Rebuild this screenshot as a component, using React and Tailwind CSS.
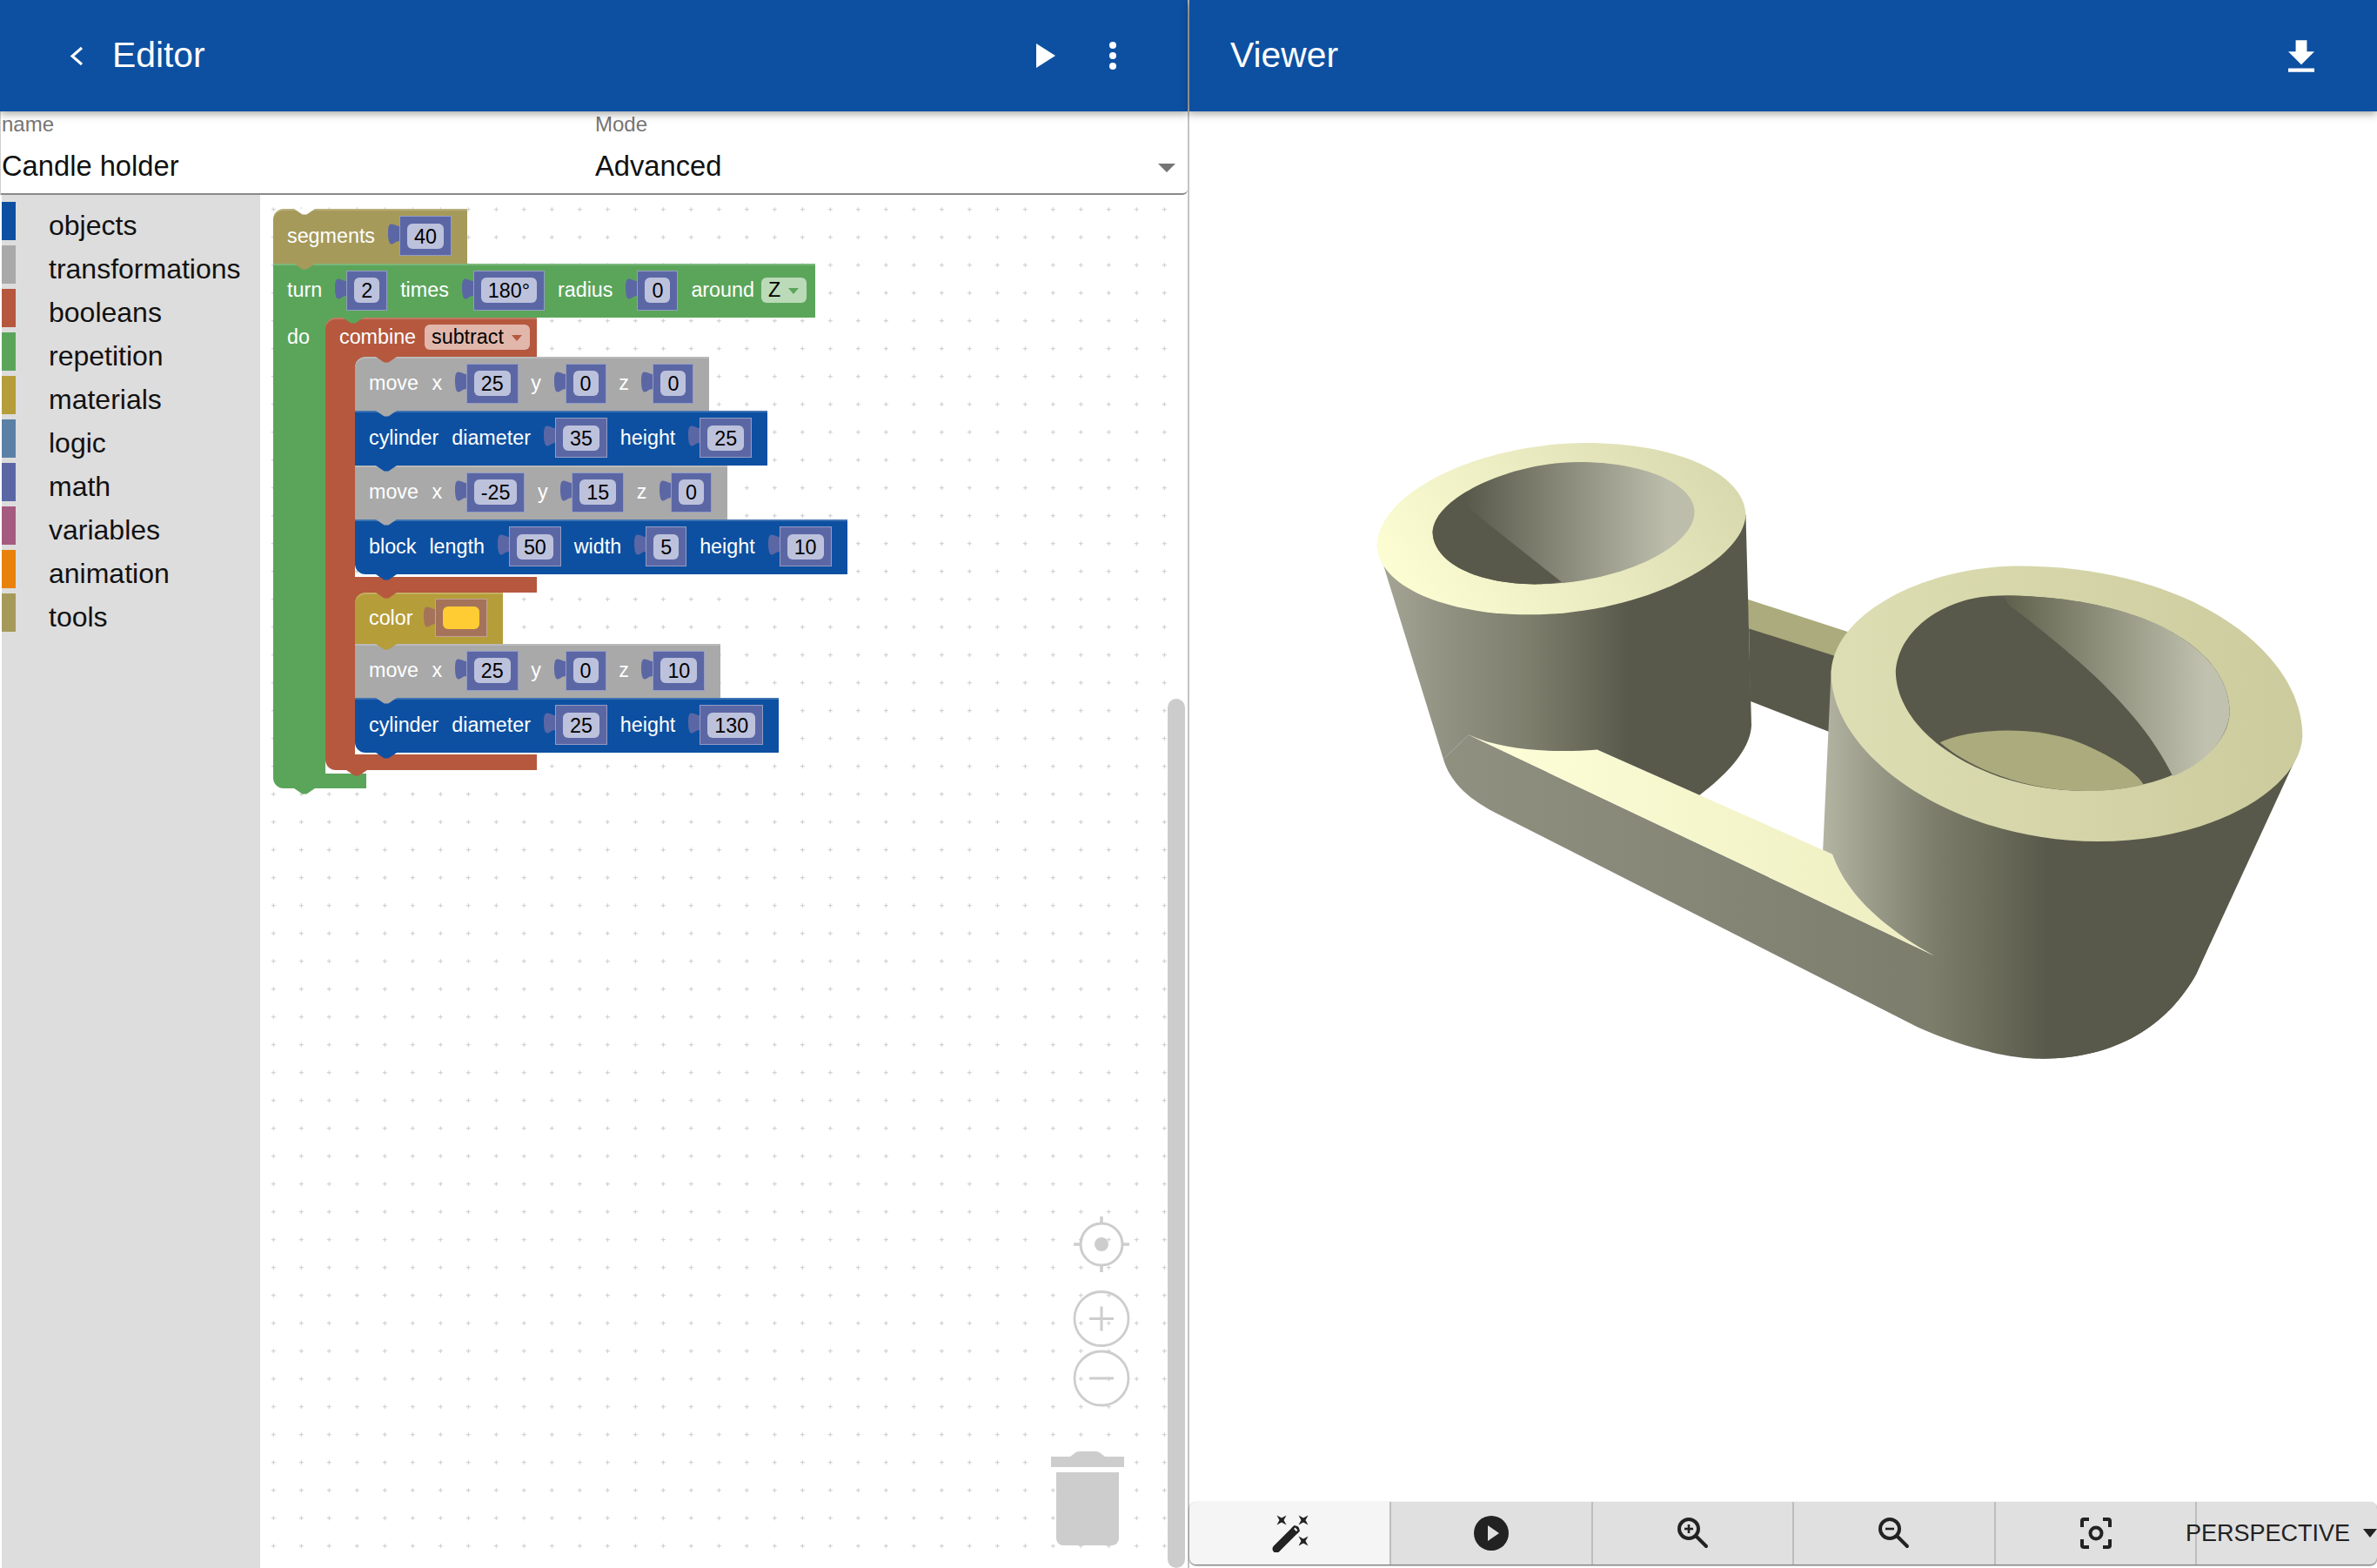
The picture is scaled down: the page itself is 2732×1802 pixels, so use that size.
const GREEN = 'bg-[#5ba55b]';
const RED = 'bg-[#b5583e]';
const GRAY = 'bg-[#a9a9a9]';
const BLUE = 'bg-[#0d50a1]';
const KHAKI = 'bg-[#a69a5b]';
const GOLD = 'bg-[#b59d3a]';

const CATEGORIES = [
  ['objects', 'bg-[#0d50a1]'],
  ['transformations', 'bg-[#a9a9a9]'],
  ['booleans', 'bg-[#b5583e]'],
  ['repetition', 'bg-[#5ba55b]'],
  ['materials', 'bg-[#b59d3a]'],
  ['logic', 'bg-[#5b80a5]'],
  ['math', 'bg-[#5b67a5]'],
  ['variables', 'bg-[#a55b80]'],
  ['animation', 'bg-[#e8820c]'],
  ['tools', 'bg-[#a69a5b]'],
];

function Notch({ fill, left, top }) {
  return (
    <svg
      viewBox="0 0 24 7"
      className={`absolute z-10 h-[7px] w-[24px] ${top ? 'top-0' : 'top-full'}`}
      style={{ left }}
    >
      <path d="M0 0L9.6 6.6H14.4L24 0Z" fill={fill} />
    </svg>
  );
}

function Row({ color, fill, behind = '', h = 'h-[62.5px]', gap = 'gap-[15px]', notch = 24, pr = 'pr-[18px]', round = '', width = 'w-fit', children }) {
  return (
    <div className={`w-fit ${behind}`}>
      <div
        className={`relative flex items-center pl-4 text-white shadow-[inset_0_2px_0_rgba(255,255,255,0.2)] ${gap} ${h} ${width} ${pr} ${color} ${round}`}
      >
        {children}
        <Notch fill={fill} left={notch} />
      </div>
    </div>
  );
}

function Tab({ fill }) {
  return (
    <svg viewBox="0 0 13 24" preserveAspectRatio="none" className="mt-[9px] h-[24px] w-[13px] shrink-0">
      <path d="M13 3C10 3 7 0 3 .5C.5 1 0 6 0 11C0 17 1 23 3.5 23.5C6 24 9 20 13 20Z" fill={fill} />
    </svg>
  );
}

function Field({ value }) {
  return (
    <div className="flex items-start">
      <Tab fill="#5b67a5" />
      <div className="border border-white/35 bg-[#5b67a5] px-2 py-[7.5px]">
        <div className="h-[29px] rounded-[6px] bg-[#bdc2dc] px-2 text-center leading-[30px] text-black">{value}</div>
      </div>
    </div>
  );
}

function Dropdown({ value, bg, arrow }) {
  return (
    <div className={`flex h-[29px] items-center gap-[9px] rounded-[6px] pl-2 pr-[9px] text-black ${bg}`}>
      <span>{value}</span>
      <svg viewBox="0 0 12 7" className="mt-0.5 h-[7px] w-[12px]">
        <path d="M0 0H12L6 7Z" fill={arrow} />
      </svg>
    </div>
  );
}

function MoveRow({ x, y, z, behind }) {
  return (
    <Row color={GRAY} fill="#a9a9a9" behind={behind} gap="gap-[14.6px]" round={behind ? 'rounded-tl-[12px]' : ''}>
      <span>move</span>
      <span className="ml-[1px]">x</span>
      <Field value={x} />
      <span>y</span>
      <Field value={y} />
      <span>z</span>
      <Field value={z} />
    </Row>
  );
}

function CylinderRow({ diameter, height, last }) {
  return (
    <Row color={BLUE} fill="#0d50a1" round={last ? 'rounded-bl-[12px]' : ''}>
      <span>cylinder</span>
      <span>diameter</span>
      <Field value={diameter} />
      <span>height</span>
      <Field value={height} />
    </Row>
  );
}

function Blocks() {
  return (
    <div className="relative w-fit text-[23.3px]">
      <div className="relative">
        <Notch fill="#ffffff" left={24} top />
        <Row color={KHAKI} fill="#a69a5b" round="rounded-tl-[12px]">
          <span>segments</span>
          <Field value="40" />
        </Row>
      </div>

      <Row color={GREEN} fill="#5ba55b" notch={80} pr="pr-[10px]">
        <span>turn</span>
        <Field value="2" />
        <span>times</span>
        <Field value="180°" />
        <span>radius</span>
        <Field value="0" />
        <span>around</span>
        <span className="-ml-[7px]">
          <Dropdown value="Z" bg="bg-[#bbdbb8]" arrow="#5ba55b" />
        </span>
      </Row>

      <div className="relative flex">
        <div className={`flex w-[60px] rounded-bl-[12px] ${GREEN}`}>
          <span className="flex h-[44.5px] items-center pl-4 text-white">do</span>
        </div>
        <div className="flex flex-col">
          <div className="relative">
            <Row color={RED} fill="#b5583e" behind={GREEN} h="h-[44.5px]" notch={58} pr="pr-[10px]" width="w-[243px]" round="rounded-tl-[12px]">
              <span>combine</span>
              <span className="-ml-[5px]">
                <Dropdown value="subtract" bg="bg-[#e1b7ac]" arrow="#b5583e" />
              </span>
            </Row>
            <div className="flex">
              <div className={`w-[34px] rounded-bl-[12px] ${RED}`} />
              <div className="flex flex-col">
                <MoveRow x="25" y="0" z="0" behind={RED} />
                <CylinderRow diameter="35" height="25" />
                <MoveRow x="-25" y="15" z="0" />
                <Row color={BLUE} fill="#0d50a1" round="rounded-bl-[12px]">
                  <span>block</span>
                  <span>length</span>
                  <Field value="50" />
                  <span>width</span>
                  <Field value="5" />
                  <span>height</span>
                  <Field value="10" />
                </Row>
                <div className={`relative mt-[3px] h-[18px] w-[209px] ${RED}`}>
                  <Notch fill="#b5583e" left={24} />
                </div>
                <Row color={GOLD} fill="#b59d3a" behind={RED} h="h-[59px]" gap="gap-[12px]" pr="pr-[18px]" round="rounded-tl-[12px]">
                  <span>color</span>
                  <div className="flex items-start">
                    <Tab fill="#a4735a" />
                    <div className="border border-white/35 bg-[#a4735a] px-2 py-2">
                      <div className="h-[26px] w-[42px] rounded-[6px] bg-[#ffcc33]" />
                    </div>
                  </div>
                </Row>
                <MoveRow x="25" y="0" z="10" />
                <CylinderRow diameter="25" height="130" last />
                <div className={`mt-[2px] h-[18px] w-[209px] ${RED}`} />
              </div>
            </div>
            <Notch fill="#b5583e" left={24} />
          </div>
          <div className={`mt-[4px] h-[17px] w-[47px] ${GREEN}`} />
        </div>
        <Notch fill="#5ba55b" left={24} />
      </div>
    </div>
  );
}

function WorkspaceControls() {
  return (
    <svg viewBox="0 0 100 392" className="absolute left-[901px] top-[1166px] h-[392px] w-[100px]" fill="none" stroke="#cdcdcd">
      <circle cx="66" cy="40" r="24" strokeWidth="3" />
      <circle cx="66" cy="40" r="8" fill="#cdcdcd" stroke="none" />
      <path d="M66 8v9M66 63v9M34 40h9M89 40h9" strokeWidth="3.5" />
      <circle cx="66" cy="125.5" r="31" strokeWidth="2.8" />
      <path d="M52 125.5h28M66 111.5v28" strokeWidth="3" />
      <circle cx="66" cy="194" r="31" strokeWidth="2.8" />
      <path d="M52 194h28" strokeWidth="3" />
      <g fill="#cdcdcd" stroke="none">
        <path d="M8 284h22l4-3c2-2 4-3 7-3h18c3 0 5 1 7 3l4 3h22v12H8z" />
        <path d="M14 302h72v76a8 8 0 0 1-8 8H22a8 8 0 0 1-8-8z" />
      </g>
    </svg>
  );
}

function Workspace() {
  return (
    <div className="relative flex-1 overflow-hidden bg-white pl-[15px] pt-4">
      <svg className="absolute inset-0 h-full w-full">
        <defs>
          <pattern id="grid" width="32" height="32" patternUnits="userSpaceOnUse">
            <path d="M12.8 16.7h5M15.3 14.2v5" stroke="#cccccc" strokeWidth="1" />
          </pattern>
        </defs>
        <rect width="100%" height="100%" fill="url(#grid)" />
      </svg>
      <Blocks />
      <WorkspaceControls />
      <div className="absolute bottom-0 right-[3px] top-[579px] w-[20px] rounded-[10px] bg-[#cccccc]" />
    </div>
  );
}

function Toolbox() {
  return (
    <div className="ml-[2px] w-[297px] bg-[#dddddd] pt-2">
      {CATEGORIES.map(([name, color]) => (
        <div key={name} className="mb-[6px] flex h-[44px] items-center">
          <div className={`h-full w-4 ${color}`} />
          <span className="ml-[38px] pt-[9px] text-[32px] text-[#111111]">{name}</span>
        </div>
      ))}
    </div>
  );
}

function EditorPane() {
  return (
    <div className="flex w-[1367px] flex-col border-r-2 border-[#c4c4c4]">
      <header className="relative z-20 flex h-[128px] items-center bg-[#0d50a1] pl-[80px] text-white shadow-[0_3px_9px_rgba(0,0,0,0.35)]">
        <svg viewBox="0 0 16 23" className="h-[23px] w-4" fill="none" stroke="white" strokeWidth="3">
          <path d="M14 2L3 11.5L14 21" />
        </svg>
        <span className="ml-[33px] text-[40.8px]">Editor</span>
        <svg viewBox="0 0 22 28" className="ml-[955px] h-[28px] w-[22px]">
          <path d="M0 0L22 14L0 28Z" fill="white" />
        </svg>
        <svg viewBox="0 0 8 32" className="ml-[62px] h-[32px] w-2" fill="white">
          <circle cx="4" cy="4" r="4" />
          <circle cx="4" cy="16" r="4" />
          <circle cx="4" cy="28" r="4" />
        </svg>
      </header>

      <div className="flex h-[96px] rounded-br-[6px] border-b-2 border-l border-[#8a8a8a] border-l-[#cfcfcf] pl-[1px]">
        <div className="w-[682px]">
          <div className="text-[24px] leading-[30px] text-[#757575]">name</div>
          <div className="mt-[11px] text-[32.7px] leading-[44px] text-[#111111]">Candle holder</div>
        </div>
        <div className="flex-1 pr-[14px]">
          <div className="text-[24px] leading-[30px] text-[#757575]">Mode</div>
          <div className="mt-[11px] flex items-center justify-between text-[32.7px] leading-[44px] text-[#111111]">
            <span>Advanced</span>
            <svg viewBox="0 0 20 10" className="mt-[3px] h-[10px] w-5">
              <path d="M0 0H20L10 10Z" fill="#757575" />
            </svg>
          </div>
        </div>
      </div>

      <div className="flex min-h-0 flex-1">
        <Toolbox />
        <Workspace />
      </div>
    </div>
  );
}

function Spark({ x, y }) {
  return <path transform={`translate(${x} ${y})`} d="M-5.5-5.5L0-2.5L5.5-5.5L2.5 0L5.5 5.5L0 2.5L-5.5 5.5L-2.5 0Z" fill="#222222" />;
}

function WandIcon() {
  return (
    <svg viewBox="0 0 48 44" className="h-[44px] w-[48px]">
      <Spark x={15} y={7} />
      <Spark x={40} y={7} />
      <Spark x={40} y={31} />
      <path d="M9 40L31 18" stroke="#222222" strokeWidth="9" strokeLinecap="round" />
      <path d="M29.5 19.5L33 16" stroke="#222222" strokeWidth="9" />
      <path d="M30.5 18.5L32 17" stroke="#f5f5f5" strokeWidth="4" />
    </svg>
  );
}

function PlayCircleIcon() {
  return (
    <svg viewBox="0 0 40 40" className="h-10 w-10">
      <circle cx="20" cy="20" r="20" fill="#222222" />
      <path d="M16 11L29 20L16 29Z" fill="#e0e0e0" />
    </svg>
  );
}

function ZoomIcon({ plus }) {
  return (
    <svg viewBox="0 0 38 38" className="h-[38px] w-[38px]" fill="none" stroke="#222222">
      <circle cx="14" cy="14" r="11" strokeWidth="4" />
      <path d="M23 23L34 34" strokeWidth="4" strokeLinecap="round" />
      <path d="M9 14H19" strokeWidth="2.6" />
      {plus && <path d="M14 9V19" strokeWidth="2.6" />}
    </svg>
  );
}

function FocusIcon() {
  return (
    <svg viewBox="0 0 36 36" className="h-9 w-9" fill="none" stroke="#222222" strokeWidth="4">
      <path d="M2 11V4a2 2 0 0 1 2-2h6M26 2h6a2 2 0 0 1 2 2v7M34 25v7a2 2 0 0 1-2 2h-6M10 34H4a2 2 0 0 1-2-2v-7" />
      <circle cx="18" cy="18" r="6.5" />
    </svg>
  );
}

function ModelDrawing() {
  return (
    <svg viewBox="0 0 1568 1568" preserveAspectRatio="none" className="ml-[172px] mt-[352px] h-[760px] w-[1140px]">
      <defs>
        <linearGradient id="wall" gradientUnits="userSpaceOnUse" x1="165" y1="0" x2="1120" y2="0">
          <stop offset="0" stopColor="#8f9080" />
          <stop offset="0.56" stopColor="#828373" />
          <stop offset="0.81" stopColor="#7c7d6b" />
          <stop offset="0.916" stopColor="#696a58" />
          <stop offset="1" stopColor="#58594a" />
        </linearGradient>
        <linearGradient id="leftSide" gradientUnits="userSpaceOnUse" x1="60" y1="0" x2="460" y2="0">
          <stop offset="0" stopColor="#a5a695" />
          <stop offset="0.3" stopColor="#8f9080" />
          <stop offset="0.6" stopColor="#7d7e6c" />
          <stop offset="1" stopColor="#58594a" />
        </linearGradient>
        <linearGradient id="rightSide" gradientUnits="userSpaceOnUse" x1="768" y1="0" x2="1120" y2="0">
          <stop offset="0" stopColor="#b2b3a1" />
          <stop offset="0.233" stopColor="#989987" />
          <stop offset="0.489" stopColor="#7c7d6b" />
          <stop offset="0.773" stopColor="#696a58" />
          <stop offset="1" stopColor="#58594a" />
        </linearGradient>
        <linearGradient id="leftRing" gradientUnits="userSpaceOnUse" x1="60" y1="400" x2="640" y2="150">
          <stop offset="0" stopColor="#feffd4" />
          <stop offset="1" stopColor="#d8d8ae" />
        </linearGradient>
        <linearGradient id="rightRing" gradientUnits="userSpaceOnUse" x1="778" y1="0" x2="1523" y2="0">
          <stop offset="0" stopColor="#dedeb4" />
          <stop offset="1" stopColor="#cbcb9d" />
        </linearGradient>
        <linearGradient id="leftHole" gradientUnits="userSpaceOnUse" x1="200" y1="0" x2="520" y2="0">
          <stop offset="0" stopColor="#58594a" />
          <stop offset="1" stopColor="#bcbdab" />
        </linearGradient>
        <linearGradient id="rightHole" gradientUnits="userSpaceOnUse" x1="1060" y1="0" x2="1370" y2="0">
          <stop offset="0" stopColor="#62634f" />
          <stop offset="1" stopColor="#c0c1ae" />
        </linearGradient>
        <linearGradient id="ledge" gradientUnits="userSpaceOnUse" x1="210" y1="0" x2="900" y2="0">
          <stop offset="0" stopColor="#feffd8" />
          <stop offset="1" stopColor="#eeeec2" />
        </linearGradient>
      </defs>

      {/* back bar */}
      <path d="M645 430L805 508L785 570L648 500Z" fill="#acab7d" />
      <path d="M648 500L790 568L775 745L650 672Z" fill="#58594a" />

      {/* long front wall */}
      <path d="M165 810C175 860 200 900 245 935L915 1445C990 1495 1060 1520 1110 1520C1230 1520 1310 1440 1355 1320L1515 800L940 1275L205 752Z" fill="url(#wall)" />

      {/* ledge */}
      <path d="M205 752C260 790 340 795 408 787L780 1035C800 1120 850 1200 940 1275Z" fill="url(#ledge)" />

      {/* left cylinder */}
      <path d="M60 300L165 810L205 752C260 790 340 795 408 787L570 895C610 850 650 790 652 730L643 230Z" fill="url(#leftSide)" />
      <path d="M60 300C65 170 230 60 390 60C530 60 640 130 643 230C640 340 480 467 300 467C170 467 60 400 60 300Z" fill="url(#leftRing)" />
      <path d="M148 270C150 190 270 105 380 105C480 105 562 155 562 225C560 310 440 395 310 395C220 395 148 345 148 270Z" fill="url(#leftHole)" />
      <path d="M148 270C150 240 175 215 205 215L352 390C335 393 320 395 310 395C220 395 148 345 148 270Z" fill="#58594a" />

      {/* right cylinder */}
      <path d="M778 600L765 1025L780 1035C800 1120 850 1200 940 1275C1000 1330 1060 1420 1110 1520C1230 1520 1310 1440 1355 1320L1523 755Z" fill="url(#rightSide)" />
      <path d="M778 600C785 460 930 352 1075 352C1340 352 1523 550 1523 755C1520 880 1380 1005 1200 1005C970 1005 775 800 778 600Z" fill="url(#rightRing)" />
      <path d="M880 600C885 500 960 422 1045 422C1260 422 1408 540 1408 700C1405 800 1310 885 1180 885C1020 885 880 750 880 600Z" fill="#58594a" />
      <path d="M1050 422C1260 422 1408 540 1408 700C1405 760 1370 820 1318 850C1270 700 1170 570 1060 445Z" fill="url(#rightHole)" />
      <path d="M950 770C1000 735 1100 730 1170 770C1220 800 1260 840 1272 870C1240 882 1210 885 1180 885C1090 885 1000 835 950 770Z" fill="#acab7d" />
    </svg>
  );
}

function ViewerPane() {
  return (
    <div className="flex min-w-0 flex-1 flex-col">
      <header className="relative z-20 flex h-[128px] items-center justify-between bg-[#0d50a1] pl-[47px] pr-[72px] text-white shadow-[0_3px_9px_rgba(0,0,0,0.35)]">
        <span className="text-[40.8px]">Viewer</span>
        <svg viewBox="5 3 14 17" className="h-[37px] w-[30px]">
          <path d="M19 9h-4V3H9v6H5l7 7 7-7zM5 18v2h14v-2H5z" fill="white" />
        </svg>
      </header>

      <div className="min-h-0 flex-1 bg-white">
        <ModelDrawing />
      </div>

      <div className="mb-1 flex h-[72px] items-stretch rounded-[8px] bg-[#e0e0e0] text-[#222222] shadow-[0_1px_2px_rgba(0,0,0,0.7)]">
        <div className="flex w-[232px] items-center justify-center rounded-l-[8px] border-r-2 border-[#bdbdbd] bg-[#f5f5f5]">
          <WandIcon />
        </div>
        <div className="flex w-[232px] items-center justify-center border-r-2 border-[#bdbdbd]">
          <PlayCircleIcon />
        </div>
        <div className="flex w-[231px] items-center justify-center border-r-2 border-[#bdbdbd]">
          <ZoomIcon plus />
        </div>
        <div className="flex w-[232px] items-center justify-center border-r-2 border-[#bdbdbd]">
          <ZoomIcon />
        </div>
        <div className="flex w-[231px] items-center justify-center border-r-2 border-[#bdbdbd]">
          <FocusIcon />
        </div>
        <div className="-ml-[13px] flex flex-1 items-center justify-between whitespace-nowrap text-[27px]">
          <span>PERSPECTIVE</span>
          <svg viewBox="0 0 16 10" className="h-[10px] w-4">
            <path d="M0 0H16L8 10Z" fill="#222222" />
          </svg>
        </div>
      </div>
    </div>
  );
}

export default function App() {
  return (
    <div className="flex h-[1802px] w-[2732px] overflow-hidden bg-white font-['Liberation_Sans',Arial,sans-serif]">
      <EditorPane />
      <ViewerPane />
    </div>
  );
}
